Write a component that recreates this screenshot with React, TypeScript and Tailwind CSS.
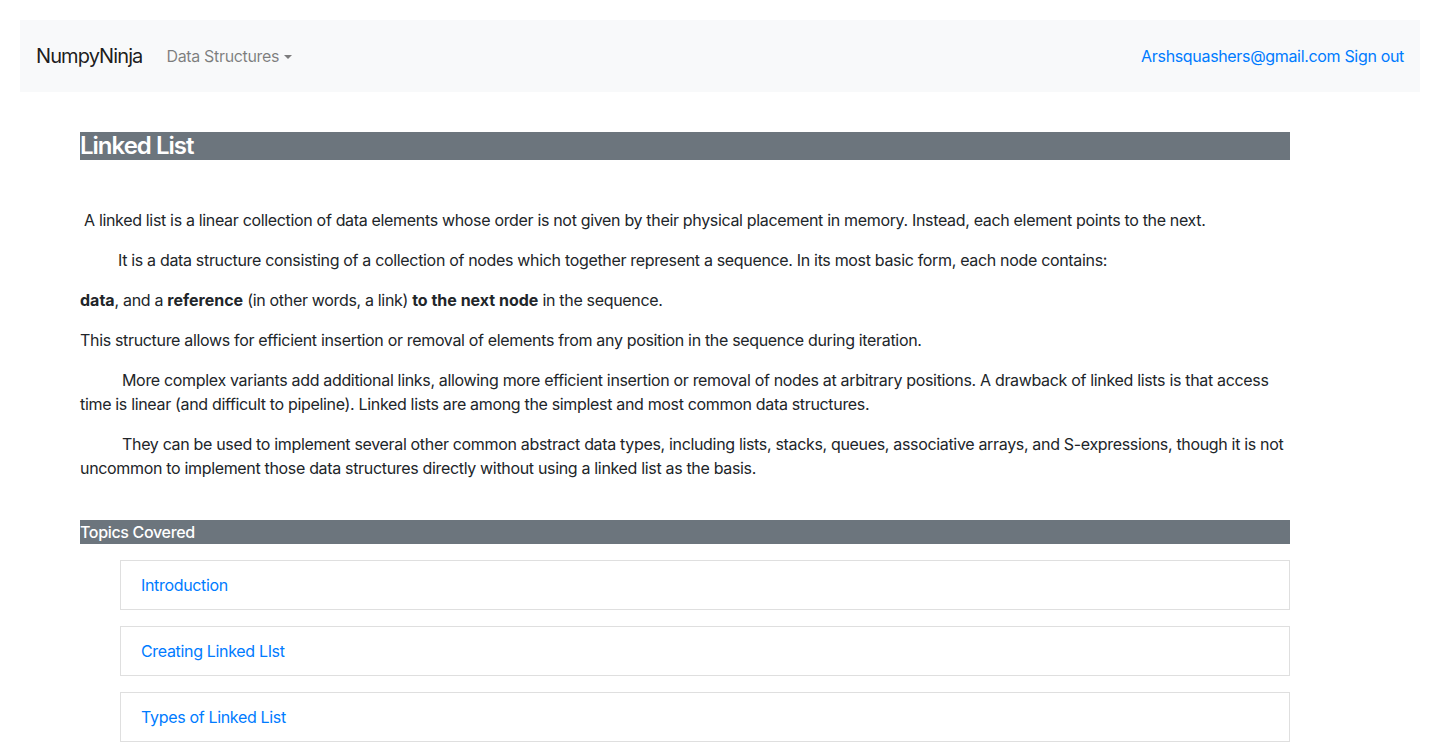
export default function App() {
  const topics = ["Introduction", "Creating Linked LIst", "Types of Linked List"];

  return (
    <div className="min-h-screen bg-white font-['Inter','Noto_Sans',sans-serif] tracking-[-0.33px] text-[#212529]">
      <div className="p-5">
        <nav className="flex h-[72px] items-center justify-between bg-[#f8f9fa] px-4">
          <div className="flex items-center">
            <a className="mr-6 text-[20px] tracking-[-0.9px] text-black/90">NumpyNinja</a>
            <a className="flex items-center text-base text-black/50">
              Data Structures
              <span className="ml-[5px] mt-[2px] h-0 w-0 border-x-[4px] border-t-[4px] border-x-transparent border-t-black/50" />
            </a>
          </div>
          <div className="text-base text-[#007bff]">
            <a>Arshsquashers@gmail.com</a> <a>Sign out</a>
          </div>
        </nav>
      </div>

      <main className="mx-[80px] w-[1210px] pt-5 text-base leading-6">
        <h2 className="bg-[#6c757d] text-[24px] font-semibold leading-7 tracking-[-1px] text-white">Linked List</h2>

        <div className="mt-12 flex flex-col gap-4">
          <p className="indent-[4px]">
            A linked list is a linear collection of data elements whose order is not given by their physical placement in
            memory. Instead, each element points to the next.
          </p>
          <p className="indent-[38px]">
            It is a data structure consisting of a collection of nodes which together represent a sequence. In its most
            basic form, each node contains:
          </p>
          <p>
            <b className="tracking-normal">data</b>, and a <b className="tracking-normal">reference</b> (in other words, a
            link) <b className="tracking-normal">to the next node</b> in the sequence.
          </p>
          <p>
            This structure allows for efficient insertion or removal of elements from any position in the sequence during
            iteration.
          </p>
          <p className="indent-[42px]">
            More complex variants add additional links, allowing more efficient insertion or removal of nodes at arbitrary
            positions. A drawback of linked lists is that access time is linear (and difficult to pipeline). Linked lists
            are among the simplest and most common data structures.
          </p>
          <p className="indent-[42px]">
            They can be used to implement several other common abstract data types, including lists, stacks, queues,
            associative arrays, and S-expressions, though it is not uncommon to implement those data structures directly
            without using a linked list as the basis.
          </p>
        </div>

        <h5 className="mt-10 bg-[#6c757d] text-base font-medium leading-6 text-white">Topics Covered</h5>

        <div className="ml-10 mt-4 flex flex-col gap-4">
          {topics.map((t) => (
            <div key={t} className="flex h-[50px] items-center border border-[#dfdfdf] px-5">
              <a className="text-[#007bff]">{t}</a>
            </div>
          ))}
        </div>
      </main>
    </div>
  );
}
